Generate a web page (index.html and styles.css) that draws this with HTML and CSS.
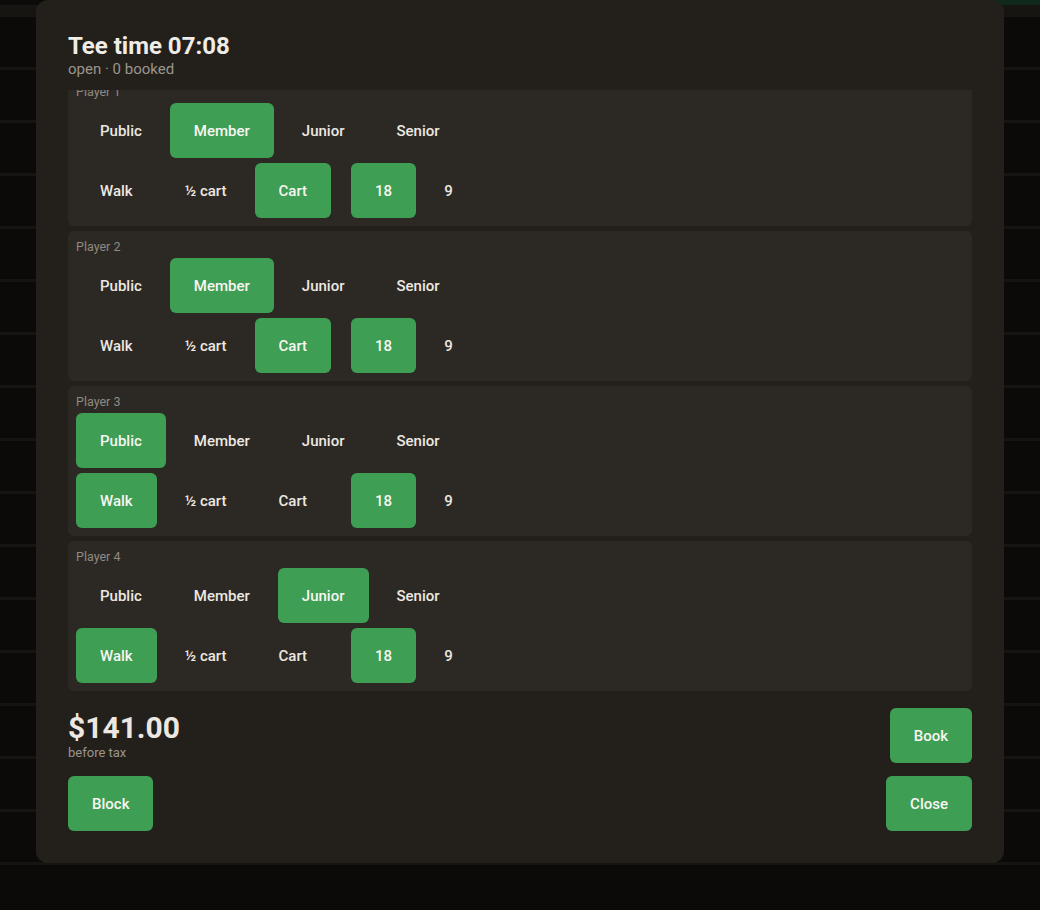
FILE: index.html
```html
<!DOCTYPE html>
<html lang="en">
<head>
<meta charset="utf-8">
<title>Tee time 07:08</title>
<link rel="stylesheet" href="styles.css">
</head>
<body>
<div class="app-bg">
  <div class="app-topbar"></div>
  <div class="app-header"></div>
  <div class="app-rows"></div>
</div>

<div class="modal" role="dialog" aria-label="Tee time 07:08">
  <header class="modal-head">
    <h1 class="modal-title">Tee time 07:08</h1>
    <div class="modal-sub">open · 0 booked</div>
  </header>

  <div class="players" id="players">
    <section class="player">
      <div class="player-label">Player 1</div>
      <div class="opt-row">
        <button class="opt">Public</button>
        <button class="opt on">Member</button>
        <button class="opt">Junior</button>
        <button class="opt">Senior</button>
      </div>
      <div class="opt-row">
        <div class="opt-group">
          <button class="opt">Walk</button>
          <button class="opt">½ cart</button>
          <button class="opt on">Cart</button>
        </div>
        <div class="opt-group">
          <button class="opt on">18</button>
          <button class="opt">9</button>
        </div>
      </div>
    </section>

    <section class="player">
      <div class="player-label">Player 2</div>
      <div class="opt-row">
        <button class="opt">Public</button>
        <button class="opt on">Member</button>
        <button class="opt">Junior</button>
        <button class="opt">Senior</button>
      </div>
      <div class="opt-row">
        <div class="opt-group">
          <button class="opt">Walk</button>
          <button class="opt">½ cart</button>
          <button class="opt on">Cart</button>
        </div>
        <div class="opt-group">
          <button class="opt on">18</button>
          <button class="opt">9</button>
        </div>
      </div>
    </section>

    <section class="player">
      <div class="player-label">Player 3</div>
      <div class="opt-row">
        <button class="opt on">Public</button>
        <button class="opt">Member</button>
        <button class="opt">Junior</button>
        <button class="opt">Senior</button>
      </div>
      <div class="opt-row">
        <div class="opt-group">
          <button class="opt on">Walk</button>
          <button class="opt">½ cart</button>
          <button class="opt">Cart</button>
        </div>
        <div class="opt-group">
          <button class="opt on">18</button>
          <button class="opt">9</button>
        </div>
      </div>
    </section>

    <section class="player">
      <div class="player-label">Player 4</div>
      <div class="opt-row">
        <button class="opt">Public</button>
        <button class="opt">Member</button>
        <button class="opt on">Junior</button>
        <button class="opt">Senior</button>
      </div>
      <div class="opt-row">
        <div class="opt-group">
          <button class="opt on">Walk</button>
          <button class="opt">½ cart</button>
          <button class="opt">Cart</button>
        </div>
        <div class="opt-group">
          <button class="opt on">18</button>
          <button class="opt">9</button>
        </div>
      </div>
    </section>
  </div>

  <footer class="modal-foot">
    <div class="foot-row">
      <div class="price">
        <div class="price-amount">$141.00</div>
        <div class="price-note">before tax</div>
      </div>
      <button class="btn">Book</button>
    </div>
    <div class="foot-row row-gap">
      <button class="btn">Block</button>
      <button class="btn">Close</button>
    </div>
  </footer>
</div>
<script src="script.js"></script>
</body>
</html>
```

FILE: styles.css
```css
* { box-sizing: border-box; }

html, body {
  margin: 0;
  padding: 0;
  width: 1040px;
  height: 910px;
  overflow: hidden;
  background: #0a0908;
  font-family: Roboto, "Liberation Sans", sans-serif;
  color: #f0ede7;
}

.app-bg {
  position: absolute;
  inset: 0;
  display: flex;
  flex-direction: column;
  background: #0a0908;
}
.app-topbar {
  height: 5px;
  background: linear-gradient(90deg, #0c0b09 0 960px, #0f2a1a 990px);
}
.app-header {
  height: 12px;
  background: #171512;
}
.app-rows {
  flex: 1;
  background: repeating-linear-gradient(180deg, #0b0a09 0 50px, #161411 50px 53px);
}

.modal {
  position: absolute;
  left: 36px;
  top: 0;
  width: 968px;
  height: 863px;
  background: #23201c;
  border-radius: 12px;
  padding: 32px;
  display: flex;
  flex-direction: column;
}

.modal-head { margin-bottom: 12px; }
.modal-title {
  margin: 0;
  font-size: 24px;
  line-height: 28px;
  font-weight: 700;
  color: #f0ede7;
}
.modal-sub {
  font-size: 15px;
  line-height: 18px;
  color: #9b958c;
}

.players {
  height: 601px;
  overflow-y: auto;
  scrollbar-width: none;
  display: flex;
  flex-direction: column;
  gap: 5px;
}
.players::-webkit-scrollbar { display: none; }

.player {
  flex: none;
  background: #2c2925;
  border-radius: 6px;
  padding: 8px;
  height: 150px;
  display: flex;
  flex-direction: column;
}
.player-label {
  font-size: 12.5px;
  line-height: 16px;
  color: #8f8a82;
  margin-bottom: 3px;
}
.opt-row {
  display: flex;
  gap: 4px;
  height: 55px;
}
.opt-row + .opt-row {
  margin-top: 5px;
  gap: 20px;
}
.opt-group {
  display: flex;
  gap: 4px;
}

.opt, .btn {
  font-family: Roboto, "Liberation Sans", sans-serif;
  font-size: 15px;
  font-weight: 500;
  height: 55px;
  padding: 0 24px;
  border: 0;
  border-radius: 6px;
  background: transparent;
  color: #ece8e1;
  cursor: pointer;
}
.opt.on, .btn {
  background: #3e9e53;
  color: #f7f6f2;
}

.modal-foot { margin-top: 17px; }
.foot-row {
  display: flex;
  justify-content: space-between;
  align-items: flex-start;
}
.row-gap { margin-top: 13px; }

.price-amount {
  font-size: 30px;
  line-height: 40px;
  font-weight: 700;
  color: #ece8e1;
}
.price-note {
  margin-top: -3px;
  font-size: 13px;
  line-height: 16px;
  color: #9b958c;
}
```

FILE: script.js
```js
var list = document.getElementById('players');
list.scrollTop = list.scrollHeight;
```
